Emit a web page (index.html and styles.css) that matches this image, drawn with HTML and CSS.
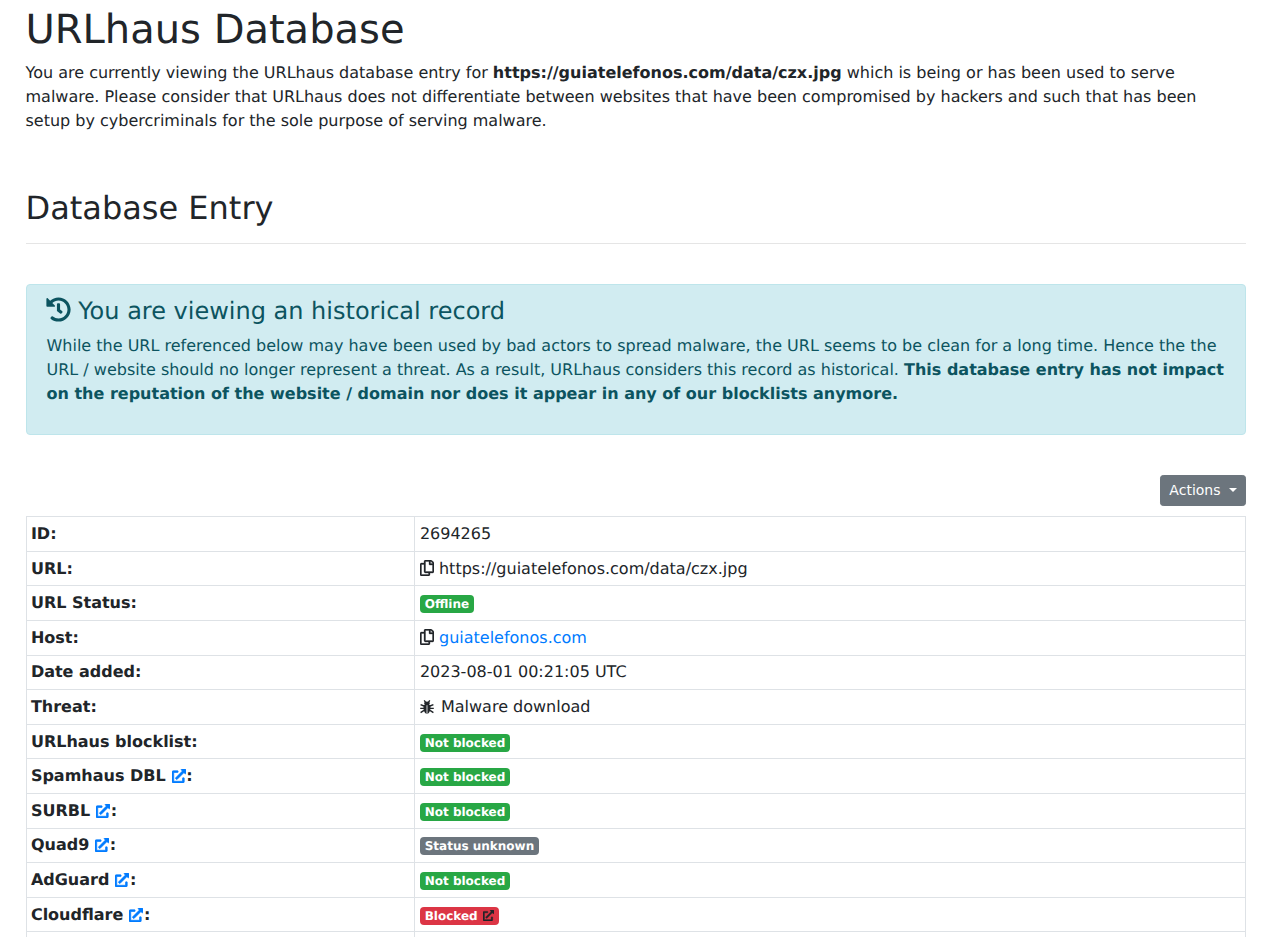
FILE: index.html
```html
<!DOCTYPE html>
<html lang="en">
<head>
    <meta charset="UTF-8">
    <meta name="viewport" content="width=device-width, initial-scale=1.0">
    <title>URLhaus Database</title>
    <link rel="stylesheet" href="styles.css">
</head>
<body>
    <svg class="icon-defs" aria-hidden="true">
        <symbol id="i-history" viewBox="0 0 512 512"><path fill="currentColor" d="M504 255.531c.253 136.64-111.18 248.372-247.82 248.468-59.015.042-113.223-20.53-155.822-54.911-11.077-8.94-11.905-25.541-1.839-35.607l11.267-11.267c8.609-8.609 22.353-9.551 31.891-1.984C173.062 425.135 212.781 440 256 440c101.705 0 184-82.311 184-184 0-101.705-82.311-184-184-184-48.814 0-93.149 18.969-126.068 49.932l50.754 50.754c10.08 10.08 2.941 27.314-11.313 27.314H24c-8.837 0-16-7.163-16-16V38.627c0-14.254 17.234-21.393 27.314-11.314l49.372 49.372C129.209 34.136 189.552 8 256 8c136.81 0 247.747 110.78 248 247.531zm-180.912 78.784l9.823-12.63c8.138-10.463 6.253-25.542-4.21-33.679L288 256.349V152c0-13.255-10.745-24-24-24h-16c-13.255 0-24 10.745-24 24v135.651l65.409 50.874c10.463 8.137 25.541 6.253 33.679-4.21z"/></symbol>
        <symbol id="i-copy" viewBox="0 0 448 512"><path fill="currentColor" stroke="currentColor" stroke-width="10" d="M433.941 65.941l-51.882-51.882A48 48 0 0 0 348.118 0H176c-26.51 0-48 21.49-48 48v48H48c-26.51 0-48 21.49-48 48v320c0 26.51 21.49 48 48 48h224c26.51 0 48-21.49 48-48v-48h80c26.51 0 48-21.49 48-48V99.882a48 48 0 0 0-14.059-33.941zM266 464H54a6 6 0 0 1-6-6V150a6 6 0 0 1 6-6h74v224c0 26.51 21.49 48 48 48h96v42a6 6 0 0 1-6 6zm128-96H182a6 6 0 0 1-6-6V54a6 6 0 0 1 6-6h106v88c0 13.255 10.745 24 24 24h88v202a6 6 0 0 1-6 6zm6-256h-64V48h9.632c1.591 0 3.117.632 4.243 1.757l48.368 48.368a6 6 0 0 1 1.757 4.243V112z"/></symbol>
        <symbol id="i-link" viewBox="0 0 512 512"><path fill="currentColor" stroke="currentColor" stroke-width="24" d="M432 320h-32a16 16 0 0 0-16 16v112H64V128h144a16 16 0 0 0 16-16V80a16 16 0 0 0-16-16H48a48 48 0 0 0-48 48v352a48 48 0 0 0 48 48h352a48 48 0 0 0 48-48V336a16 16 0 0 0-16-16zM488 0H360c-21.37 0-32.05 25.91-17 41l35.73 35.73L135 320.37a24 24 0 0 0 0 34L157.67 377a24 24 0 0 0 34 0l243.61-243.68L471 169c15 15 41 4.5 41-17V24a24 24 0 0 0-24-24z"/></symbol>
        <symbol id="i-bug" viewBox="0 0 14 14">
            <path fill="none" stroke="currentColor" stroke-width="1.4" d="M4.2 .4 5.8 2.6M9.8 .4 8.2 2.6M.6 4.6 4 6M13.4 4.6 10 6M.2 8.4H4M13.8 8.4H10M.6 12.6 4 10.4M13.4 12.6 10 10.4"/>
            <ellipse fill="currentColor" cx="7" cy="3.4" rx="2.8" ry="1.9"/>
            <path fill="currentColor" d="M6.6 5H3.8C3.2 7.4 3.2 12.2 6.6 14zM7.4 5h2.8c.6 2.4.6 7.2-2.8 9z"/>
        </symbol>
    </svg>
    <div class="container">
        <h1>URLhaus Database</h1>
        <p>You are currently viewing the URLhaus database entry for <strong>https://guiatelefonos.com/data/czx.jpg</strong> which is being or has been used to serve malware. Please consider that URLhaus does not differentiate between websites that have been compromised by hackers and such that has been setup by cybercriminals for the sole purpose of serving malware.</p>
        <h2>Database Entry</h2>
        <hr>
        <div class="alert">
            <h4><svg class="icon-history"><use href="#i-history"/></svg> You are viewing an historical record</h4>
            <p>While the URL referenced below may have been used by bad actors to spread malware, the URL seems to be clean for a long time. Hence the the URL / website should no longer represent a threat. As a result, URLhaus considers this record as historical. <strong>This database entry has not impact on the reputation of the website / domain nor does it appear in any of our blocklists anymore.</strong></p>
        </div>
        <div class="actions">
            <button class="btn">Actions</button>
        </div>
        <table class="entry">
            <tr><th>ID:</th><td>2694265</td></tr>
            <tr><th>URL:</th><td><svg class="icon-copy"><use href="#i-copy"/></svg> https://guiatelefonos.com/data/czx.jpg</td></tr>
            <tr><th>URL Status:</th><td><span class="badge green">Offline</span></td></tr>
            <tr><th>Host:</th><td><svg class="icon-copy"><use href="#i-copy"/></svg> <a href="#">guiatelefonos.com</a></td></tr>
            <tr><th>Date added:</th><td>2023-08-01 00:21:05 UTC</td></tr>
            <tr><th>Threat:</th><td><svg class="icon-bug"><use href="#i-bug"/></svg> Malware download</td></tr>
            <tr><th>URLhaus blocklist:</th><td><span class="badge green">Not blocked</span></td></tr>
            <tr><th>Spamhaus DBL <a href="#"><svg class="icon-link"><use href="#i-link"/></svg></a>:</th><td><span class="badge green">Not blocked</span></td></tr>
            <tr><th>SURBL <a href="#"><svg class="icon-link"><use href="#i-link"/></svg></a>:</th><td><span class="badge green">Not blocked</span></td></tr>
            <tr><th>Quad9 <a href="#"><svg class="icon-link"><use href="#i-link"/></svg></a>:</th><td><span class="badge grey">Status unknown</span></td></tr>
            <tr><th>AdGuard <a href="#"><svg class="icon-link"><use href="#i-link"/></svg></a>:</th><td><span class="badge green">Not blocked</span></td></tr>
            <tr><th>Cloudflare <a href="#"><svg class="icon-link"><use href="#i-link"/></svg></a>:</th><td><span class="badge red">Blocked <svg class="icon-badge"><use href="#i-link"/></svg></span></td></tr>
            <tr><th>&nbsp;</th><td>&nbsp;</td></tr>
        </table>
    </div>
</body>
</html>
```
FILE: styles.css
```css
*{
    box-sizing: border-box;
}
html, body{
    height: 100%;
}
body{
    margin: 0;
    overflow: hidden;
    font-family: "DejaVu Sans", sans-serif;
    font-size: 16px;
    line-height: 1.5;
    color: #212529;
    background-color: white;
    text-rendering: geometricPrecision;
}
a{
    color: #007bff;
    text-decoration: none;
}
.icon-defs{
    display: none;
}
.container{
    width: 1220px;
    margin-left: 25.5px;
    padding-top: 5px;
}
h1, h2, h4{
    font-weight: 500;
    line-height: 1.2;
    margin: 0 0 8px;
}
h1{
    font-size: 40px;
    transform: translateY(0.5px);
}
h2{
    font-size: 32px;
    margin-top: 56px;
}
p{
    margin: 0 0 16px;
}
strong, th{
    font-weight: bold;
}
hr{
    border: 0;
    border-top: 1px solid rgba(0, 0, 0, 0.1);
    margin: 16px 0 40px;
}
.alert{
    background-color: #d1ecf1;
    border: 1px solid #bee5eb;
    border-radius: 4px;
    color: #0c5460;
    padding: 12px 20px;
    margin-bottom: 40px;
}
h4{
    font-size: 24px;
}
.icon-history{
    width: 25px;
    height: 25px;
    margin-left: -1px;
    vertical-align: -3px;
}
.actions{
    display: flex;
    justify-content: flex-end;
    margin-bottom: 10px;
}
.btn{
    font-family: inherit;
    font-size: 14px;
    line-height: 1.5;
    color: white;
    background-color: #6c757d;
    border: 1px solid #6c757d;
    border-radius: 3.2px;
    padding: 4px 8px;
}
.btn::after{
    content: "";
    display: inline-block;
    margin-left: 8px;
    vertical-align: 3px;
    border-top: 4.2px solid;
    border-left: 4.2px solid transparent;
    border-right: 4.2px solid transparent;
}
.entry{
    width: 100%;
    table-layout: fixed;
    border-collapse: collapse;
}
.entry th, .entry td{
    border: 1px solid #dee2e6;
    padding: 4.8px;
    text-align: left;
    vertical-align: top;
}
.entry th{
    width: 388px;
    padding-left: 4.4px;
}
.entry td{
    padding-left: 5.4px;
}
.icon-copy{
    width: 14px;
    height: 16px;
    overflow: visible;
    vertical-align: -2px;
}
.icon-bug{
    width: 14px;
    height: 14px;
    margin-right: 2px;
    vertical-align: -2px;
}
.icon-link{
    width: 14px;
    height: 14px;
    margin: 0 0.5px 0 0.5px;
    overflow: visible;
    vertical-align: -2px;
}
.badge{
    display: inline-block;
    font-size: 12px;
    font-weight: bold;
    line-height: 1;
    padding: 3px 4.8px;
    border-radius: 4px;
    color: white;
    vertical-align: baseline;
    white-space: nowrap;
}
.green{
    background-color: #28a745;
}
.grey{
    background-color: #6c757d;
}
.red{
    background-color: #dc3545;
}
.icon-badge{
    width: 11px;
    height: 11px;
    margin-left: 1px;
    color: #212529;
    vertical-align: -1px;
}
```
